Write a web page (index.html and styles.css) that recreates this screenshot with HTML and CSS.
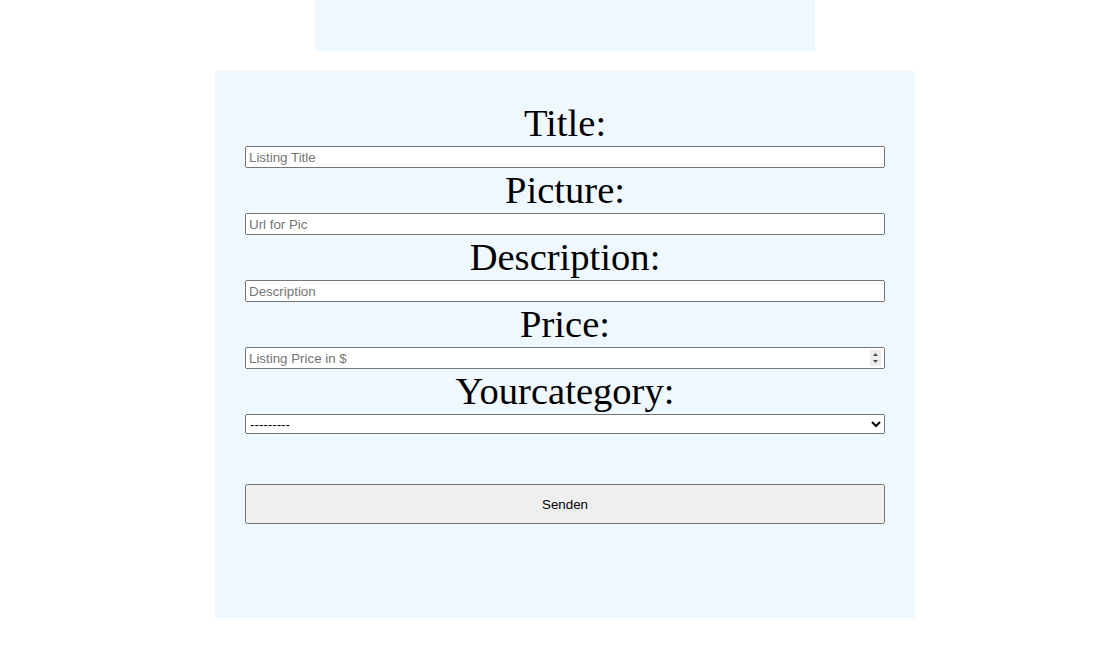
FILE: index.html
```html
<!DOCTYPE html>
<html>
<head>
<meta charset="utf-8">
<link rel="stylesheet" href="styles.css">
</head>
<body>
<div class="page">
  <div class="header"></div>
  <form class="card">
    <label class="label" for="t">Title:</label>
    <input class="field" id="t" type="text" placeholder="Listing Title">
    <label class="label" for="p">Picture:</label>
    <input class="field" id="p" type="text" placeholder="Url for Pic">
    <label class="label" for="d">Description:</label>
    <input class="field" id="d" type="text" placeholder="Description">
    <label class="label" for="pr">Price:</label>
    <div class="number-wrap">
      <input class="field number" id="pr" type="number" placeholder="Listing Price in $">
      <span class="spinner" aria-hidden="true">
        <svg width="11" height="16" viewBox="0 0 11 16"><path d="M3 6 L8 6 L5.5 3 Z" fill="#505050"/><path d="M3 10 L8 10 L5.5 13 Z" fill="#505050"/></svg>
      </span>
    </div>
    <label class="label" for="c">Yourcategory:</label>
    <select class="select" id="c"><option>---------</option></select>
    <button class="submit" type="button">Senden</button>
  </form>
</div>
</body>
</html>
```
FILE: styles.css
```css
html, body {
  margin: 0;
  padding: 0;
  background: #ffffff;
}
.page {
  padding-left: 37px;
  display: flex;
  flex-direction: column;
  align-items: center;
}
.header {
  width: 500px;
  height: 51px;
  background: #eff7ff;
}
.card {
  margin-top: 20px;
  width: 640px;
  padding: 30px 30px 94px;
  background: #eff7ff;
  display: flex;
  flex-direction: column;
}
.label {
  display: block;
  text-align: center;
  font-family: "Liberation Serif", serif;
  font-size: 38.6px;
  line-height: 45px;
  color: #000;
}
.field, .select {
  box-sizing: border-box;
  width: 640px;
  margin: 0;
  font-family: "Liberation Sans", Arial, sans-serif;
  font-size: 13.333px;
}
.field {
  height: 22px;
  display: block;
}
.number-wrap {
  position: relative;
  height: 22px;
}
.number::-webkit-inner-spin-button,
.number::-webkit-outer-spin-button {
  -webkit-appearance: none;
  margin: 0;
}
.spinner {
  position: absolute;
  right: 4px;
  top: 3px;
  width: 11px;
  height: 16px;
  background: #ececec;
  display: flex;
  pointer-events: none;
}
.select {
  height: 20px;
}
.submit {
  box-sizing: border-box;
  width: 640px;
  height: 40px;
  margin-top: 50px;
  font-family: "Liberation Sans", Arial, sans-serif;
  font-size: 13.333px;
}
```
